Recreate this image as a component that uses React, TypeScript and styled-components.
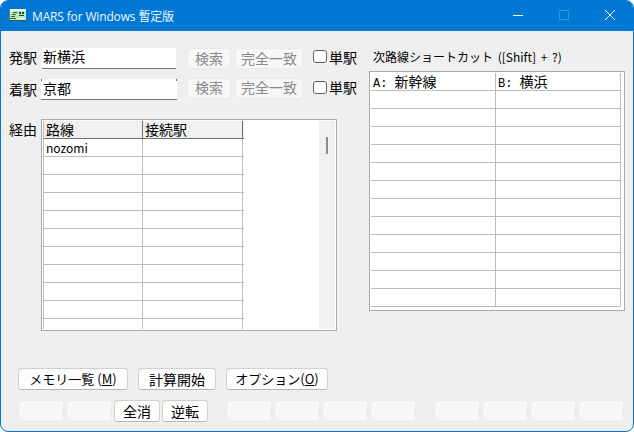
import React from "react";
import styled, { createGlobalStyle } from "styled-components";

const Global = createGlobalStyle`
  html, body {
    margin: 0;
    padding: 0;
    background: #ffffff;
  }
  * {
    box-sizing: border-box;
  }
`;

const FONT = `"Noto Sans CJK JP", "Noto Sans", sans-serif`;

const Window = styled.div`
  width: 634px;
  height: 432px;
  display: flex;
  flex-direction: column;
  background: #efefef;
  border: 1px solid #0078d4;
  border-radius: 8px;
  overflow: hidden;
  font-family: ${FONT};
  color: #000;
`;
const TitleBar = styled.div`
  height: 30px;
  flex: none;
  display: flex;
  align-items: center;
  background: #0078d4;
  color: #eef6fc;
  padding-left: 8px;
`;
const TitleText = styled.div`
  margin-left: 6px;
  font-family: "Open Sans", "Noto Sans CJK JP", sans-serif;
  font-size: 12px;
  letter-spacing: -0.15px;
  white-space: nowrap;
`;
const WinControls = styled.div`
  margin-left: auto;
  display: flex;
  align-items: center;
`;
const WinButton = styled.div`
  width: 46px;
  height: 30px;
  padding-bottom: 2px;
  display: flex;
  align-items: center;
  justify-content: center;
`;
const Main = styled.div`
  flex: 1;
  display: flex;
  padding: 17px 8px 0;
  min-height: 0;
`;
const LeftColumn = styled.div`
  width: 360px;
  flex: none;
`;
const StationRow = styled.div`
  display: flex;
  align-items: flex-start;
  height: 22px;
  margin-bottom: 8px;
`;
const Label = styled.div<{ $top?: number }>`
  width: 32px;
  flex: none;
  margin-top: ${(p) => p.$top ?? 0}px;
  font-size: 14px;
  line-height: 18px;
`;
const StationInput = styled.input<{ $active?: boolean; $lift: number }>`
  width: ${(p) => (p.$active ? 136 : 134)}px;
  height: 21px;
  margin: ${(p) => (p.$active ? "1px 0 0" : "0 0 0 1px")};
  padding: 0 ${(p) => (p.$active ? 2 : 1)}px ${(p) => p.$lift}px;
  border: none;
  border-bottom: 1px solid #767676;
  background-color: #fff;
  background-image: ${(p) =>
    p.$active
      ? "linear-gradient(#6a6a6a, #6a6a6a), linear-gradient(#6a6a6a, #6a6a6a)"
      : "none"};
  background-size: 1px 2px;
  background-position: 0 0, 100% 0;
  background-repeat: no-repeat;
  font-family: ${FONT};
  font-size: 14px;
  color: #000;
  outline: none;
`;
const SearchGroup = styled.div<{ $shift: number; $top: number }>`
  display: flex;
  margin-left: ${(p) => p.$shift}px;
  margin-top: ${(p) => p.$top}px;
`;
const SearchButton = styled.button<{ $width: number; $lift: number }>`
  width: ${(p) => p.$width}px;
  height: 21px;
  padding: 0 0 ${(p) => p.$lift}px;
  margin-left: 4px;
  border: 1px solid #eaeaea;
  border-radius: 4px;
  background: #f7f7f7;
  color: #8a8a8a;
  font-family: ${FONT};
  font-size: 14px;
  line-height: 17px;
  &:first-child {
    margin-left: 0;
  }
`;
const CheckBox = styled.span<{ $top: number }>`
  width: 14px;
  height: 13px;
  flex: none;
  margin-left: 10px;
  margin-top: ${(p) => p.$top}px;
  background: #fff;
  border: 1px solid #5e5e5e;
  border-radius: 3px;
`;
const CheckLabel = styled.span`
  margin-left: 2px;
  font-size: 14px;
  line-height: 18px;
`;
const RouteRow = styled.div`
  display: flex;
  margin-top: 19px;
`;
const RoutePanel = styled.div`
  width: 296px;
  height: 212px;
  display: flex;
  padding: 1px;
  background: #fff;
  border: 1px solid #a9a9ae;
`;
const RouteGrid = styled.div`
  width: 201px;
  height: 208px;
  flex: none;
  border-left: 1px solid #bdbdbd;
`;
const GridRow = styled.div<{ $cols: string; $height: number; $header?: boolean; $open?: boolean }>`
  display: grid;
  grid-template-columns: ${(p) => p.$cols};
  height: ${(p) => p.$height}px;
  background: ${(p) => (p.$header ? "#f0f0f0" : "#fff")};
  border-bottom: ${(p) => (p.$open ? "none" : `1px solid ${p.$header ? "#6f6f6f" : "#bdbdbd"}`)};
`;
const RouteCell = styled.div<{ $header?: boolean }>`
  padding-left: 2px;
  border-right: 1px solid ${(p) => (p.$header ? "#6f6f6f" : "#bdbdbd")};
  font-size: ${(p) => (p.$header ? 14 : 12)}px;
  line-height: 17px;
  white-space: nowrap;
`;
const ScrollTrack = styled.div`
  width: 16px;
  margin-left: auto;
  background: #f0f0f0;
  display: flex;
  justify-content: center;
  padding-top: 16px;
`;
const ScrollThumb = styled.div`
  width: 2px;
  height: 17px;
  background: #8a8a8a;
`;
const RightColumn = styled.div`
  width: 257px;
  flex: none;
`;
const ShortcutTitle = styled.div`
  height: 23px;
  padding-left: 4px;
  font-size: 12px;
  word-spacing: 2px;
  line-height: 18px;
  white-space: nowrap;
`;
const ShortcutPanel = styled.div`
  width: 256px;
  height: 240px;
  padding: 1px 3px 0 1px;
  background: #fff;
  border: 1px solid #a9a9ae;
`;
const ShortcutGrid = styled.div`
  border-right: 1px solid #bdbdbd;
`;
const ShortcutCell = styled.div`
  padding-left: 2px;
  border-right: 1px solid #bdbdbd;
  font-size: 14px;
  line-height: 17px;
  white-space: pre;
  &:last-child {
    border-right: none;
  }
`;
const ShortcutKey = styled.span`
  font-family: "Liberation Mono", monospace;
  font-size: 12px;
`;
const Footer = styled.div`
  flex: none;
  padding: 0 0 9px 17px;
`;
const ActionRow = styled.div`
  display: flex;
  gap: 10px;
  margin-bottom: 10px;
`;
const ActionButton = styled.button<{ $width: number; $large?: boolean }>`
  width: ${(p) => p.$width}px;
  height: 22px;
  padding: 0;
  background: #fdfdfd;
  border: 1px solid #d0d0d0;
  border-bottom-color: #b4b4b4;
  border-radius: 4px;
  font-family: ${FONT};
  font-size: ${(p) => (p.$large ? 14 : 13)}px;
  line-height: 18px;
  color: #000;
`;
const KeyRow = styled.div`
  display: flex;
  gap: 18px;
`;
const KeyGroup = styled.div`
  display: flex;
  gap: 2px;
`;
const KeyButton = styled.button<{ $enabled?: boolean }>`
  width: 46px;
  height: 22px;
  padding: 0;
  background: ${(p) => (p.$enabled ? "#fdfdfd" : "#f7f7f7")};
  border: 1px solid ${(p) => (p.$enabled ? "#d0d0d0" : "#eaeaea")};
  border-bottom-color: ${(p) => (p.$enabled ? "#b4b4b4" : "#eaeaea")};
  border-radius: 4px;
  font-family: ${FONT};
  font-size: 14px;
  line-height: 18px;
  color: #000;
`;
const IconSvg = styled.svg`
  flex: none;
  margin-bottom: 2px;
`;

const AppIcon = () => (
  <IconSvg width="17" height="12" viewBox="0 0 17 12" shapeRendering="crispEdges">
    <rect width="17" height="12" fill="#b8ecc0" />
    <rect x="0" y="0" width="17" height="2" fill="#e6f8ea" />
    <rect x="0" y="0" width="1" height="12" fill="#5f7f6a" />
    <rect x="0" y="11" width="17" height="1" fill="#3c5a48" />
    <rect x="10" y="3" width="2" height="2" fill="#26402f" />
    <rect x="13" y="3" width="2" height="2" fill="#26402f" />
    <rect x="10" y="6" width="5" height="1" fill="#26402f" />
    <rect x="4" y="3" width="4" height="1" fill="#3d5a3d" />
    <rect x="3" y="5" width="4" height="1" fill="#3d5a3d" />
    <rect x="2" y="7" width="4" height="1" fill="#3d5a3d" />
    <rect x="1" y="9" width="6" height="1" fill="#3d5a3d" />
    <rect x="9" y="9" width="6" height="1" fill="#f4fff6" />
  </IconSvg>
);

const ROUTE_COLS = "99px 100px";
const SHORTCUT_COLS = "125px 1fr";

function App() {
  const routeRows = Array.from({ length: 10 }, (_, i) => i);
  const shortcutRows = Array.from({ length: 12 }, (_, i) => i);

  return (
    <Window>
      <Global />
      <TitleBar>
        <AppIcon />
        <TitleText>MARS for Windows 暫定版</TitleText>
        <WinControls>
          <WinButton>
            <svg width="10" height="10" viewBox="0 0 10 10">
              <path d="M0 5.5h10" stroke="#fff" strokeWidth="1" />
            </svg>
          </WinButton>
          <WinButton>
            <svg width="10" height="10" viewBox="0 0 10 10">
              <rect x="0.5" y="0.5" width="9" height="9" rx="1" fill="none" stroke="#3a96dd" />
            </svg>
          </WinButton>
          <WinButton>
            <svg width="10" height="10" viewBox="0 0 10 10">
              <path d="M0 0L10 10M10 0L0 10" stroke="#fff" strokeWidth="1" />
            </svg>
          </WinButton>
        </WinControls>
      </TitleBar>
      <Main>
        <LeftColumn>
          <StationRow>
            <Label>発駅</Label>
            <StationInput defaultValue="新横浜" $lift={4} />
            <SearchGroup $shift={11} $top={0}>
              <SearchButton $width={44} $lift={1}>検索</SearchButton>
              <SearchButton $width={68} $lift={1}>完全一致</SearchButton>
            </SearchGroup>
            <CheckBox $top={2} />
            <CheckLabel>単駅</CheckLabel>
          </StationRow>
          <StationRow>
            <Label $top={2}>着駅</Label>
            <StationInput $active defaultValue="京都" $lift={2} />
            <SearchGroup $shift={10} $top={0}>
              <SearchButton $width={44} $lift={3}>検索</SearchButton>
              <SearchButton $width={68} $lift={3}>完全一致</SearchButton>
            </SearchGroup>
            <CheckBox $top={3} />
            <CheckLabel>単駅</CheckLabel>
          </StationRow>
          <RouteRow>
            <Label $top={1}>経由</Label>
            <RoutePanel>
              <RouteGrid>
                <GridRow $cols={ROUTE_COLS} $height={18} $header>
                  <RouteCell $header>路線</RouteCell>
                  <RouteCell $header>接続駅</RouteCell>
                </GridRow>
                {routeRows.map((i) => (
                  <GridRow key={i} $cols={ROUTE_COLS} $height={18}>
                    <RouteCell>{i === 0 ? "nozomi" : ""}</RouteCell>
                    <RouteCell />
                  </GridRow>
                ))}
                <GridRow $cols={ROUTE_COLS} $height={10} $open>
                  <RouteCell />
                  <RouteCell />
                </GridRow>
              </RouteGrid>
              <ScrollTrack>
                <ScrollThumb />
              </ScrollTrack>
            </RoutePanel>
          </RouteRow>
        </LeftColumn>
        <RightColumn>
          <ShortcutTitle>次路線ショートカット ([Shift] + ?)</ShortcutTitle>
          <ShortcutPanel>
            <ShortcutGrid>
              <GridRow $cols={SHORTCUT_COLS} $height={18}>
                <ShortcutCell>
                  <ShortcutKey>A: </ShortcutKey>新幹線
                </ShortcutCell>
                <ShortcutCell>
                  <ShortcutKey>B: </ShortcutKey>横浜
                </ShortcutCell>
              </GridRow>
              {shortcutRows.map((i) => (
                <GridRow key={i} $cols={SHORTCUT_COLS} $height={18}>
                  <ShortcutCell />
                  <ShortcutCell />
                </GridRow>
              ))}
            </ShortcutGrid>
          </ShortcutPanel>
        </RightColumn>
      </Main>
      <Footer>
        <ActionRow>
          <ActionButton $width={110}>
            メモリ一覧 (<u>M</u>)
          </ActionButton>
          <ActionButton $width={78} $large>計算開始</ActionButton>
          <ActionButton $width={102}>
            オプション(<u>O</u>)
          </ActionButton>
        </ActionRow>
        <KeyRow>
          <KeyGroup>
            <KeyButton />
            <KeyButton />
            <KeyButton $enabled>全消</KeyButton>
            <KeyButton $enabled>逆転</KeyButton>
          </KeyGroup>
          <KeyGroup>
            <KeyButton />
            <KeyButton />
            <KeyButton />
            <KeyButton />
          </KeyGroup>
          <KeyGroup>
            <KeyButton />
            <KeyButton />
            <KeyButton />
            <KeyButton />
          </KeyGroup>
        </KeyRow>
      </Footer>
    </Window>
  );
}

export default App;
